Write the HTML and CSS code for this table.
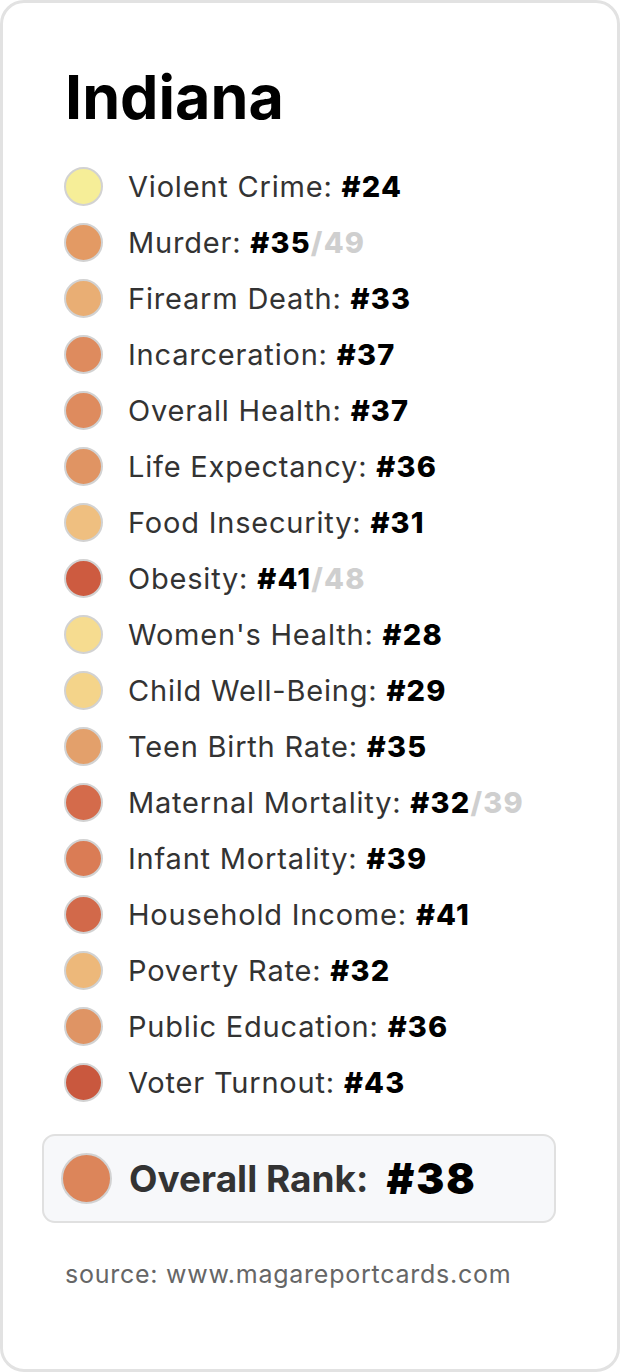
FILE: index.html
```html
<!DOCTYPE html>
<html lang="en">
<head>
<meta charset="utf-8">
<title>Indiana</title>
<link rel="stylesheet" href="styles.css">
</head>
<body>
<div class="card">
  <h1 class="title">Indiana</h1>
  <ul class="list">
    <li class="row"><span class="dot" style="background:#f6ee98"></span><span class="label">Violent Crime: <b>#24</b></span></li>
    <li class="row"><span class="dot" style="background:#e39a64"></span><span class="label">Murder: <b>#35</b><b class="of">/49</b></span></li>
    <li class="row"><span class="dot" style="background:#e9ae74"></span><span class="label">Firearm Death: <b>#33</b></span></li>
    <li class="row"><span class="dot" style="background:#de8b5e"></span><span class="label">Incarceration: <b>#37</b></span></li>
    <li class="row"><span class="dot" style="background:#de8b5e"></span><span class="label">Overall Health: <b>#37</b></span></li>
    <li class="row"><span class="dot" style="background:#e09463"></span><span class="label">Life Expectancy: <b>#36</b></span></li>
    <li class="row"><span class="dot" style="background:#efbf80"></span><span class="label">Food Insecurity: <b>#31</b></span></li>
    <li class="row"><span class="dot" style="background:#cd5b40"></span><span class="label">Obesity: <b>#41</b><b class="of">/48</b></span></li>
    <li class="row"><span class="dot" style="background:#f6dc90"></span><span class="label">Women's Health: <b>#28</b></span></li>
    <li class="row"><span class="dot" style="background:#f4d48a"></span><span class="label">Child Well-Being: <b>#29</b></span></li>
    <li class="row"><span class="dot" style="background:#e3a06b"></span><span class="label">Teen Birth Rate: <b>#35</b></span></li>
    <li class="row"><span class="dot" style="background:#d46b4b"></span><span class="label">Maternal Mortality: <b>#32</b><b class="of">/39</b></span></li>
    <li class="row"><span class="dot" style="background:#da7c55"></span><span class="label">Infant Mortality: <b>#39</b></span></li>
    <li class="row"><span class="dot" style="background:#d2694a"></span><span class="label">Household Income: <b>#41</b></span></li>
    <li class="row"><span class="dot" style="background:#edb87a"></span><span class="label">Poverty Rate: <b>#32</b></span></li>
    <li class="row"><span class="dot" style="background:#df9464"></span><span class="label">Public Education: <b>#36</b></span></li>
    <li class="row"><span class="dot" style="background:#c9583e"></span><span class="label">Voter Turnout: <b>#43</b></span></li>
  </ul>
  <div class="overall">
    <span class="dot big" style="background:#dc855a"></span>
    <span class="overall-label">Overall Rank:</span>
    <span class="overall-rank">#38</span>
  </div>
  <p class="source">source: www.magareportcards.com</p>
</div>
</body>
</html>
```

FILE: styles.css
```css
html, body {
  margin: 0;
  padding: 0;
  background: #ffffff;
}
body {
  font-family: Inter, "Noto Sans", "Liberation Sans", sans-serif;
}
.card {
  box-sizing: border-box;
  width: 620px;
  height: 1372px;
  border: 3px solid #e2e2e2;
  border-radius: 24px;
  background: #ffffff;
  padding: 59px 62px 0 39px;
}
.title {
  margin: 0 0 0 23px;
  font-size: 61px;
  font-weight: 700;
  line-height: 70px;
  color: #000;
  letter-spacing: 0;
}
.list {
  list-style: none;
  margin: 26px 0 0 0;
  padding: 0 0 0 22px;
}
.row {
  display: flex;
  align-items: center;
  height: 56px;
  gap: 25px;
}
.dot {
  flex: none;
  box-sizing: border-box;
  width: 39px;
  height: 39px;
  border-radius: 50%;
  border: 2px solid #d2d2d2;
}
.label {
  font-size: 29px;
  color: #333;
  white-space: nowrap;
  letter-spacing: 0.8px;
}
.label b {
  font-weight: 800;
  color: #000;
  letter-spacing: 1.2px;
}
.label b.of {
  color: #cfcfcf;
}
.overall {
  box-sizing: border-box;
  margin-top: 24px;
  width: 514px;
  height: 89px;
  display: flex;
  align-items: center;
  padding-left: 17px;
  background: #f7f8fa;
  border: 2px solid #e0e0e0;
  border-radius: 13px;
}
.dot.big {
  width: 51px;
  height: 51px;
}
.overall-label {
  margin-left: 17px;
  font-size: 37px;
  font-weight: 700;
  color: #333;
  letter-spacing: 0;
}
.overall-rank {
  margin-left: 18px;
  font-size: 42px;
  font-weight: 900;
  color: #000;
  letter-spacing: 2px;
}
.source {
  margin: 36px 0 0 23px;
  font-size: 25px;
  color: #666;
  letter-spacing: 0.75px;
}
```
